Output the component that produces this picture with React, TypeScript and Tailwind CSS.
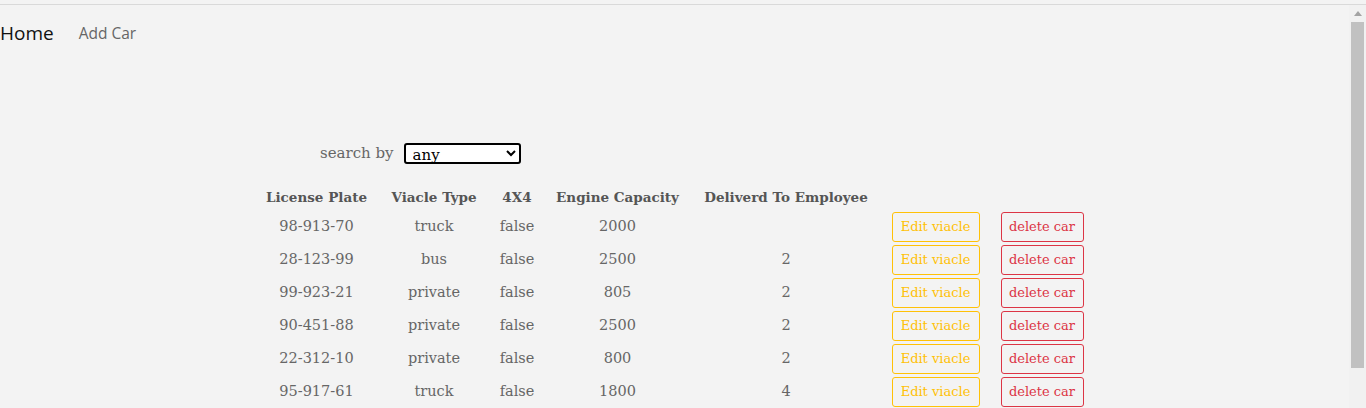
import React from "react";

const rows = [
  ["98-913-70", "truck", "false", "2000", ""],
  ["28-123-99", "bus", "false", "2500", "2"],
  ["99-923-21", "private", "false", "805", "2"],
  ["90-451-88", "private", "false", "2500", "2"],
  ["22-312-10", "private", "false", "800", "2"],
  ["95-917-61", "truck", "false", "1800", "4"],
];

const serif = { fontFamily: '"DejaVu Serif", serif' } as React.CSSProperties;

export default function App() {
  return (
    <div className="h-[408px] w-[1366px] overflow-hidden bg-[#f3f3f3] flex flex-col">
      <div className="h-[4px] bg-[#f3f3f3]" />
      <div className="h-px bg-[#d9d9d9]" />
      <div className="flex flex-1 min-h-0">
        <div className="flex-1 min-w-0">
          <nav className="flex items-center h-[58px] pb-[1px]" style={{ fontFamily: '"Open Sans", sans-serif' }}>
            <span className="text-[19px] text-[#111]">Home</span>
            <span className="ml-[25px] text-[15.5px] text-[#666]">Add Car</span>
          </nav>
          <div className="w-[839px] mx-auto" style={serif}>
            <div className="mt-[79px] flex items-center h-[22px] pl-[65px]">
              <span className="text-[15px] text-[#666]">search by</span>
              <select
                className="ml-[10px] w-[117px] h-[21px] border-2 border-black rounded-[3px] bg-white text-[15px] text-black pl-[3px] py-0 leading-[17px]"
                defaultValue="any"
              >
                <option value="any">any</option>
              </select>
            </div>
            <table className="mt-[20px] border-collapse table-fixed w-[839px]">
              <colgroup>
                <col className="w-[123px]" />
                <col className="w-[112px]" />
                <col className="w-[54px]" />
                <col className="w-[147px]" />
                <col className="w-[190px]" />
                <col className="w-[109px]" />
                <col className="w-[104px]" />
              </colgroup>
              <thead>
                <tr className="h-[26px] text-[13.5px] font-bold text-[#555]">
                  <th className="text-center whitespace-nowrap">License Plate</th>
                  <th className="text-center whitespace-nowrap">Viacle Type</th>
                  <th className="text-center whitespace-nowrap">4X4</th>
                  <th className="text-center whitespace-nowrap">Engine Capacity</th>
                  <th className="text-center whitespace-nowrap">Deliverd To Employee</th>
                  <th />
                  <th />
                </tr>
              </thead>
              <tbody>
                {rows.map((r, i) => (
                  <tr key={i} className="h-[33px] text-[14.5px] text-[#666]">
                    {r.map((c, j) => (
                      <td key={j} className="text-center whitespace-nowrap">
                        {c}
                      </td>
                    ))}
                    <td className="text-center">
                      <button className="h-[30px] w-[88px] border border-[#ffc107] rounded-[3px] text-[#ffc107] text-[13px]">
                        Edit viacle
                      </button>
                    </td>
                    <td className="text-center">
                      <button className="h-[30px] w-[83px] border border-[#dc3545] rounded-[3px] text-[#dc3545] text-[13px]">
                        delete car
                      </button>
                    </td>
                  </tr>
                ))}
              </tbody>
            </table>
          </div>
        </div>
        <div className="w-[17px] bg-[#f1f1f1] flex flex-col items-center">
          <div className="h-[17px] flex items-center justify-center">
            <svg width="8" height="5" viewBox="0 0 8 5">
              <path d="M0 5 L4 0 L8 5 Z" fill="#a3a3a3" />
            </svg>
          </div>
          <div className="w-[13px] h-[346px] bg-[#c1c1c1]" />
        </div>
      </div>
    </div>
  );
}
